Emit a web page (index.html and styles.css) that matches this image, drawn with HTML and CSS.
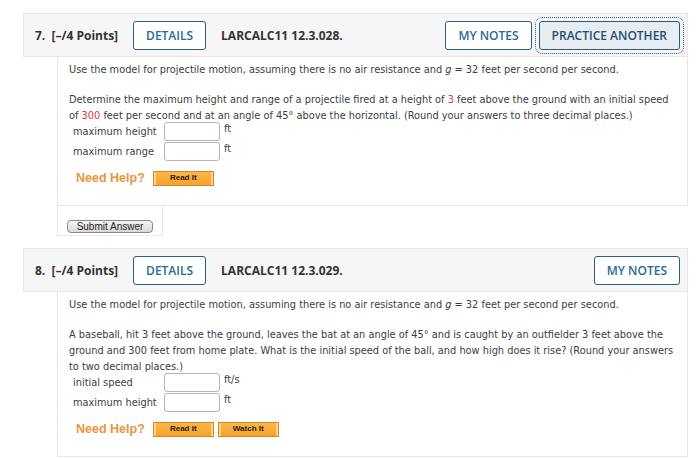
FILE: index.html
```html
<!DOCTYPE html>
<html>
<head>
<meta charset="utf-8">
<link rel="stylesheet" href="styles.css">
</head>
<body>
<div class="page">
  <section class="question">
    <div class="q-head">
      <span class="q-num">7.&nbsp; [–/4 Points]</span>
      <button class="btn-outline">DETAILS</button>
      <span class="q-code">LARCALC11 12.3.028.</span>
      <div class="q-actions">
        <button class="btn-outline">MY NOTES</button>
        <button class="btn-outline btn-practice">PRACTICE ANOTHER</button>
      </div>
    </div>
    <div class="q-body">
      <p>Use the model for projectile motion, assuming there is no air resistance and <i>g</i> = 32 feet per second per second.</p>
      <p class="gap">Determine the maximum height and range of a projectile fired at a height of <span class="red">3</span> feet above the ground with an initial speed of <span class="red">300</span> feet per second and at an angle of 45° above the horizontal. (Round your answers to three decimal places.)</p>
      <div class="answers">
        <span class="lbl">maximum height</span><span class="field"></span><span class="unit">ft</span>
        <span class="lbl">maximum range</span><span class="field"></span><span class="unit">ft</span>
      </div>
      <div class="help">
        <span class="need">Need Help?</span>
        <span class="help-btn">Read It</span>
      </div>
    </div>
    <div class="submit-box">
      <button class="submit">Submit Answer</button>
    </div>
  </section>

  <section class="question">
    <div class="q-head">
      <span class="q-num">8.&nbsp; [–/4 Points]</span>
      <button class="btn-outline">DETAILS</button>
      <span class="q-code">LARCALC11 12.3.029.</span>
      <div class="q-actions">
        <button class="btn-outline">MY NOTES</button>
      </div>
    </div>
    <div class="q-body">
      <p>Use the model for projectile motion, assuming there is no air resistance and <i>g</i> = 32 feet per second per second.</p>
      <p class="gap">A baseball, hit 3 feet above the ground, leaves the bat at an angle of 45° and is caught by an outfielder 3 feet above the ground and 300 feet from home plate. What is the initial speed of the ball, and how high does it rise? (Round your answers to two decimal places.)</p>
      <div class="answers">
        <span class="lbl">initial speed</span><span class="field"></span><span class="unit">ft/s</span>
        <span class="lbl">maximum height</span><span class="field"></span><span class="unit">ft</span>
      </div>
      <div class="help">
        <span class="need">Need Help?</span>
        <span class="help-btn">Read It</span>
        <span class="help-btn">Watch It</span>
      </div>
    </div>
  </section>
</div>
</body>
</html>
```

FILE: styles.css
```css
* { box-sizing: border-box; }
body {
  margin: 0;
  background: #fff;
  font-family: "DejaVu Sans", Verdana, sans-serif;
  color: #3d3d3d;
}
.page {
  padding: 13px 12px 0 23px;
  display: flex;
  flex-direction: column;
  gap: 12px;
}
.question { display: flex; flex-direction: column; }
.q-head {
  height: 44px;
  background: #f6f6f6;
  border: 1px solid #e8e8e8;
  display: flex;
  align-items: center;
  padding: 0 7px 0 11px;
  font-family: "Open Sans", sans-serif;
}
.q-num {
  font-weight: 700;
  font-size: 12px;
  color: #333;
  margin-right: 15px;
}
.q-code {
  font-weight: 700;
  font-size: 12px;
  color: #333;
  margin-left: 15px;
}
.btn-outline {
  height: 29px;
  padding: 0 12px;
  background: #fff;
  border: 1px solid #2f5c7b;
  border-radius: 3px;
  font-family: "Open Sans", sans-serif;
  font-size: 12px;
  font-weight: 600;
  color: #2a6a93;
}
.q-actions {
  margin-left: auto;
  display: flex;
  gap: 7px;
}
.btn-practice {
  background: #e6edf3;
  color: #1f4f70;
  outline: 1px dotted #2f5c7b;
  outline-offset: 3px;
}
.q-body {
  margin-left: 34px;
  border: 1px solid #e8e8e8;
  border-top: 0;
  padding: 5px 10px 19px 11px;
  font-size: 9.8px;
  line-height: 16px;
}
.q-body p { margin: 0; }
.q-body p.gap { margin-top: 14px; }
.red { color: #d43a3a; }
.answers {
  display: grid;
  grid-template-columns: 91px 56px auto;
  row-gap: 1px;
  padding-left: 4px;
  margin-top: -2px;
  align-items: start;
}
.lbl { line-height: 19px; }
.field {
  width: 56px;
  height: 19px;
  border: 1px solid #b5b5b5;
  border-radius: 3px;
  background: #fff;
}
.unit { padding-left: 4px; line-height: 14px; }
.help {
  display: flex;
  align-items: center;
  gap: 4px;
  margin-top: 9px;
  padding-left: 7px;
}
.need {
  font-family: "Liberation Sans", Arial, sans-serif;
  font-weight: 700;
  font-size: 12.5px;
  color: #e9953a;
  margin-right: 4px;
}
.help-btn {
  width: 61px;
  height: 15px;
  background: linear-gradient(#fbb64a, #f5a32c);
  border: 1px solid #d5862a;
  box-shadow: inset 2px 0 0 #fcd48e, inset -2px 0 0 #fcd48e;
  font-family: "Liberation Sans", Arial, sans-serif;
  font-weight: 700;
  font-size: 8px;
  color: #2a2010;
  display: flex;
  align-items: center;
  justify-content: center;
}
.submit-box {
  margin-left: 34px;
  width: 106px;
  height: 30px;
  border: 1px solid #e8e8e8;
  border-top: 0;
  padding: 9px 0 0 9px;
}
.submit {
  width: 86px;
  height: 13px;
  padding: 0;
  border: 1px solid #8a8a8a;
  border-radius: 4px;
  background: linear-gradient(#f4f4f4, #d9d9d9);
  font-family: "Liberation Sans", Arial, sans-serif;
  font-size: 10px;
  color: #222;
  line-height: 11px;
}
```
